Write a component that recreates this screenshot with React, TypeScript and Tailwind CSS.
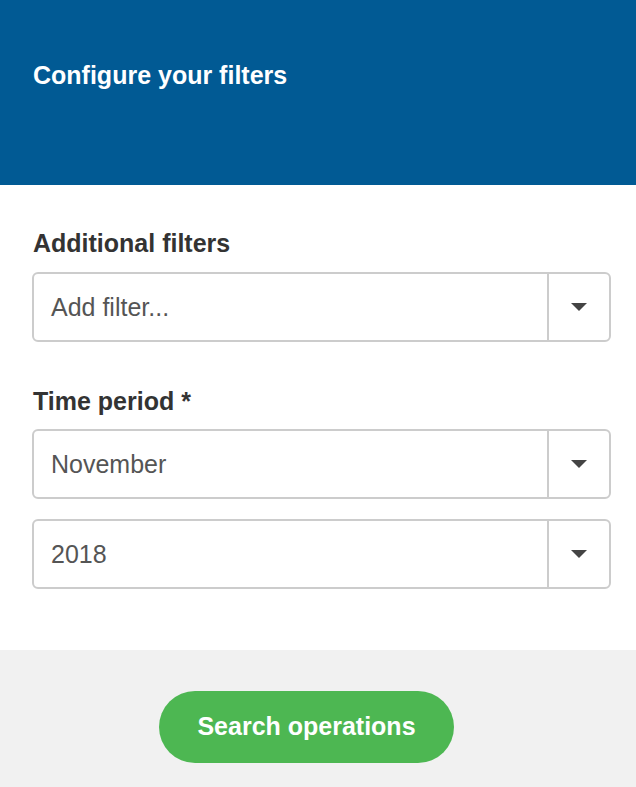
import React from "react";

function SelectBox({ value, placeholder }: { value?: string; placeholder?: string }) {
  return (
    <div className="flex h-[70px] w-full items-stretch rounded-[6px] border-2 border-[#cccccc] bg-white">
      <div className="flex flex-1 items-center pl-[17px] pt-[2px] text-[25px] text-[#555555]">
        {value ?? placeholder}
      </div>
      <div className="flex w-[62px] items-center justify-center border-l-2 border-[#cccccc]">
        <svg width="16" height="8" viewBox="0 0 16 8">
          <polygon points="0,0 16,0 8,8" fill="#444444" />
        </svg>
      </div>
    </div>
  );
}

export default function App() {
  return (
    <div className="flex min-h-[787px] w-full flex-col bg-white font-['Liberation_Sans',Arial,sans-serif]">
      {/* Header */}
      <header className="flex h-[185px] items-start bg-[#015a94] pl-[33px] pt-[59px]">
        <h1 className="text-[25px] font-bold leading-[32px] text-white">Configure your filters</h1>
      </header>

      {/* Filters */}
      <section className="flex flex-col pl-[32px] pr-[25px] pt-[43px] pb-[61px]">
        <label className="mb-[14px] pl-[1px] text-[25px] font-bold leading-[30px] text-[#333333]">Additional filters</label>
        <SelectBox placeholder="Add filter..." />

        <label className="mt-[44px] mb-[13px] pl-[1px] text-[25px] font-bold leading-[30px] text-[#333333]">Time period *</label>
        <SelectBox value="November" />
        <div className="h-[20px]" />
        <SelectBox value="2018" />
      </section>

      {/* Footer */}
      <footer className="flex flex-1 items-start bg-[#f1f1f1] pl-[159px] pt-[41px]">
        <button className="h-[72px] w-[295px] rounded-full bg-[#4db752] text-[25px] font-bold text-white">
          Search operations
        </button>
      </footer>
    </div>
  );
}
